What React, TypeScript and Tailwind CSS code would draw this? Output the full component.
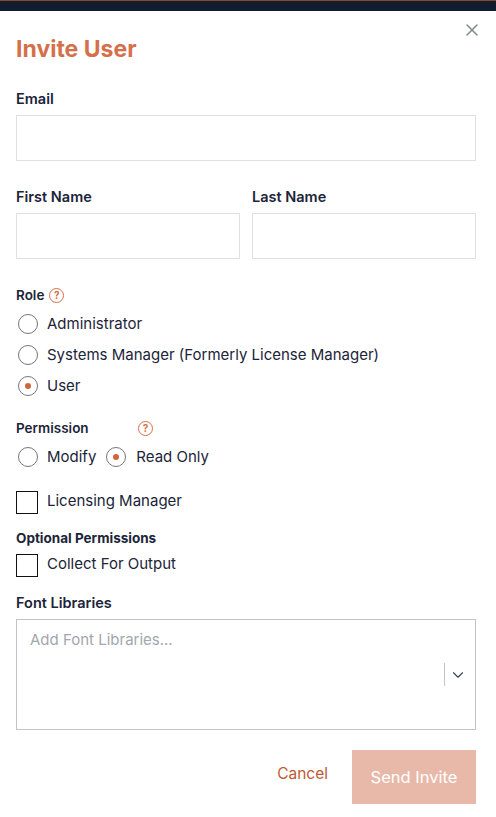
import { X, ChevronDown } from "lucide-react";

const ink = "text-[#1b2438]";

const Help = () => (
  <span className="flex h-[15px] w-[15px] items-center justify-center rounded-full border border-[#d4704a] text-[10px] font-bold leading-none text-[#d4704a]">
    ?
  </span>
);

const Radio = ({ label, checked = false, wide = false }: { label: string; checked?: boolean; wide?: boolean }) => (
  <label className={wide ? "flex items-center gap-[10px]" : "flex items-center gap-[9px]"}>
    <span className="ml-[2px] flex h-5 w-5 items-center justify-center rounded-full border border-[#767676] bg-white">
      {checked && <span className="h-[6px] w-[6px] rounded-full bg-[#d0663c]" />}
    </span>
    <span className={`text-[15px] leading-5 ${ink}`}>{label}</span>
  </label>
);

const Check = ({ label }: { label: string }) => (
  <label className="flex items-center gap-[9px]">
    <span className="h-[23px] w-[22px] border border-[#111111] bg-white" />
    <span className={`-mt-1 text-[15px] leading-5 ${ink}`}>{label}</span>
  </label>
);

const Field = ({ label }: { label: string }) => (
  <div className="min-w-0 flex-1">
    <div className={`mb-[6px] text-[14.5px] font-semibold leading-[20px] ${ink}`}>{label}</div>
    <input className="block h-[46px] w-full border border-[#e0e0e0] bg-white" />
  </div>
);

export default function App() {
  return (
    <div className="h-[817px] w-[496px] overflow-hidden bg-white font-['Inter',sans-serif]">
      <div className="h-[11px] border-t border-[#8a4a2a] bg-[#111c30]" />
      <div className="relative pl-4 pr-5">
        <button className="absolute right-[14px] top-[9px] text-[#7f8a8a]">
          <X size={20} strokeWidth={1.75} />
        </button>
        <h1 className="pt-[23px] text-[23px] font-bold leading-[30px] text-[#d4704a]">Invite User</h1>

        <div className="mt-[25px]">
          <Field label="Email" />
        </div>
        <div className="mt-[26px] flex gap-3">
          <Field label="First Name" />
          <Field label="Last Name" />
        </div>

        <div className={`mt-[27px] flex items-center gap-[5px] text-[13.5px] font-semibold leading-[18px] ${ink}`}>
          Role <Help />
        </div>
        <div className="mt-[10px] flex flex-col gap-[11px]">
          <Radio label="Administrator" />
          <Radio label="Systems Manager (Formerly License Manager)" />
          <Radio label="User" checked />
        </div>

        <div className={`mt-[23px] flex items-center text-[13.5px] font-semibold leading-[18px] ${ink}`}>
          <span className="w-[122px]">Permission</span>
          <Help />
        </div>
        <div className="mt-[10px] flex gap-2">
          <Radio label="Modify" />
          <Radio label="Read Only" checked wide />
        </div>

        <div className="mt-[24px]">
          <Check label="Licensing Manager" />
        </div>
        <div className={`mt-[15px] text-[13.5px] font-bold leading-[18px] ${ink}`}>Optional Permissions</div>
        <div className="mt-[7px]">
          <Check label="Collect For Output" />
        </div>

        <div className={`mt-[16px] text-[14.5px] font-semibold leading-5 ${ink}`}>Font Libraries</div>
        <div className="relative mt-[6px] h-[111px] border border-[#c4c4c4] bg-white pl-[13px] pt-[7px]">
          <span className="text-[15px] leading-5 text-[#a3a6ad]">Add Font Libraries...</span>
          <span className="absolute right-[30px] top-[43px] h-[23px] w-px bg-[#c4c4c4]" />
          <ChevronDown className="absolute right-[8px] top-[46px] text-[#3a4256]" size={18} strokeWidth={1.5} />
        </div>

        <div className="mt-[20px] flex items-start justify-end">
          <button className="mr-[24px] mt-[14px] text-[15.5px] leading-5 text-[#bd5a33]">Cancel</button>
          <button className="h-[54px] w-[124px] bg-[#e8b9a8] text-[16.5px] text-white">Send Invite</button>
        </div>
      </div>
    </div>
  );
}
